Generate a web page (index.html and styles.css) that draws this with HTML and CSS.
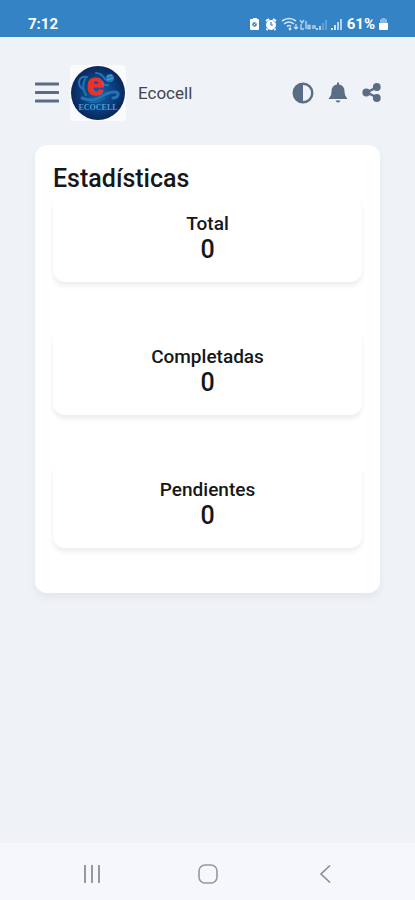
FILE: index.html
```html
<!DOCTYPE html>
<html lang="es">
<head>
    <meta charset="UTF-8">
    <meta name="viewport" content="width=device-width, initial-scale=1.0">
    <title>Ecocell</title>
    <link rel="stylesheet" href="styles.css">
</head>
<body>

    <div class="status-bar">
        <span class="time">7:12</span>
        <div class="status-icons">
            <svg width="94" height="14" viewBox="0 0 94 14" aria-hidden="true">
                <!-- Battery saver -->
                <path d="M3 2h1V1h4v1h1q1 0 1 1v9q0 1-1 1H2q-1 0-1-1V3q0-1 1-1z" fill="#fff"/>
                <circle cx="5.500" cy="7.500" r="2.300" fill="#3483c4"/>
                <path d="M4.500 8.500l2-2" stroke="#fff"/>
                <!-- Alarm -->
                <circle cx="22" cy="8" r="5" fill="#fff"/>
                <path d="M17 4l3-2M27 4l-3-2M18.500 12l-1 1M25.500 12l1 1" stroke="#fff" stroke-width="2"/>
                <path d="M22 5v3h2" fill="none" stroke="#3483c4" stroke-width="1.200"/>
                <!-- Wifi -->
                <g fill="none" stroke="#d3e5f4" stroke-width="1.600">
                    <path d="M33 4q7-5 14 0M35 7q5-4 10 0M38 9.500q2-2 4 0"/>
                    <path d="M47 7v5M45 10l2 2 2-2" stroke-width="1.200"/>
                </g>
                <circle cx="41" cy="12" r="1.400" fill="#d3e5f4"/>
                <!-- Voice over LTE -->
                <g fill="none" stroke="#b4d2eb" stroke-width="1.400">
                    <path d="M51 3l2 3 2-3M52 7v5h3M57 4v8M61 8.500h-2v3h2zM64 12V9h2v3"/>
                </g>
                <!-- Signal -->
                <path d="M67 11h2v2h-2zM70 9h2v4h-2z" fill="#b4d2eb"/>
                <path d="M73 6h2v7h-2zM76 3h2v10h-2z" fill="#669fce"/>
                <path d="M82 11h2v2h-2zM85 8h2v5h-2z" fill="#d3e5f4"/>
                <path d="M88 5h2v8h-2zM91 2h2v11h-2z" fill="#b4d2eb"/>
            </svg>
            <span>61%</span>
            <svg width="9" height="14" viewBox="0 0 9 14" aria-hidden="true">
                <path d="M3 1h3v1h1q1 0 1 1v3H1V3q0-1 1-1h1z" fill="#8ab8df"/>
                <path d="M0 6h9v6q0 1-1 1H1q-1 0-1-1z" fill="#fff"/>
            </svg>
        </div>
    </div>

    <header class="header">
        <button class="icon-button" type="button" aria-label="Menú">
            <svg width="24" height="22" viewBox="0 0 24 22">
                <path d="M1 2h22M1 10.500h22M1 19h22" stroke="#5a6d84" stroke-width="3" stroke-linecap="round"/>
            </svg>
        </button>
        <a class="brand" href="#">
            <svg class="logo" width="56" height="56" viewBox="0 0 56 56" aria-hidden="true">
                <defs>
                    <radialGradient id="globe">
                        <stop offset="0" stop-color="#1465a8"/>
                        <stop offset="0.600" stop-color="#0b3f80"/>
                        <stop offset="1" stop-color="#0a2658"/>
                    </radialGradient>
                </defs>
                <rect width="56" height="56" rx="4" fill="#fafbfd"/>
                <circle cx="28" cy="28" r="27" fill="url(#globe)"/>
                <g fill="none" stroke="#2474b4" stroke-linecap="round">
                    <path d="M17 12q-7-1-8 5 0 5 4 7M15 14q-4 8 1 16" stroke-width="2"/>
                    <path d="M12 33q10 4 17 0 9-6 15-6 5 0 4 3-1 3-5 3" stroke-width="3"/>
                    <path d="M26 8q5 0 9 6l3 2M32 17q2 4 6 3" stroke-width="2"/>
                    <path d="M19 37q9 2 16-4" stroke-width="1"/>
                </g>
                <circle cx="40" cy="13" r="4" fill="#2878b8"/>
                <path d="M37 12l5-2M37 15l6-2" stroke="#4c9fd5"/>
                <text class="logo-letter" x="25" y="30" text-anchor="middle">e</text>
                <text class="logo-name" x="28" y="45" text-anchor="middle">ECOCELL</text>
            </svg>
            <span>Ecocell</span>
        </a>
        <div class="actions">
            <button class="icon-button" type="button" aria-label="Cambiar tema">
                <svg width="22" height="22" viewBox="0 0 22 22">
                    <circle cx="11" cy="11" r="9.300" fill="none" stroke="#5a6d84" stroke-width="2.400"/>
                    <path d="M11 2a9 9 0 0 0 0 18z" fill="#5a6d84"/>
                </svg>
            </button>
            <button class="icon-button" type="button" aria-label="Notificaciones">
                <svg width="20" height="22" viewBox="0 0 20 22">
                    <path d="M9 1.500q0-1.200 1-1.200t1 1.200v1q5.500 1 5.500 7 0 4 2 6 .8.800.8 1.500H.7q0-.7.800-1.500 2-2 2-6 0-6 5.500-7z" fill="#5a6d84"/>
                    <path d="M7.500 18.500h5q-.5 2-2.500 2t-2.500-2z" fill="#5a6d84"/>
                </svg>
            </button>
            <button class="icon-button" type="button" aria-label="Compartir">
                <svg width="20" height="22" viewBox="0 0 20 22">
                    <path d="M15 5L5 10.500l10 5" fill="none" stroke="#5a6d84" stroke-width="2.400"/>
                    <g fill="#5a6d84">
                        <circle cx="14.800" cy="5" r="3.900"/>
                        <circle cx="4.300" cy="10.500" r="3.900"/>
                        <circle cx="14.800" cy="16" r="3.900"/>
                    </g>
                </svg>
            </button>
        </div>
    </header>

    <main class="container">
        <h1>Estadísticas</h1>
        <div class="stats">
            <div class="stat">
                <h2>Total</h2>
                <p>0</p>
            </div>
            <div class="stat">
                <h2>Completadas</h2>
                <p>0</p>
            </div>
            <div class="stat">
                <h2>Pendientes</h2>
                <p>0</p>
            </div>
        </div>
    </main>

    <nav class="nav-bar">
        <button class="icon-button" type="button" aria-label="Recientes">
            <svg width="20" height="20" viewBox="0 0 20 20">
                <path d="M3 1v18M10 1v18M17 1v18" stroke="#8d8e91" stroke-width="1.800"/>
            </svg>
        </button>
        <button class="icon-button" type="button" aria-label="Inicio">
            <svg width="20" height="20" viewBox="0 0 20 20">
                <rect x="1" y="1" width="18" height="18" rx="6" fill="none" stroke="#97989b" stroke-width="1.600"/>
            </svg>
        </button>
        <button class="icon-button" type="button" aria-label="Atrás">
            <svg width="20" height="20" viewBox="0 0 20 20">
                <path d="M15 1.500L6 10l9 8.500" fill="none" stroke="#8d8e91" stroke-width="1.700"/>
            </svg>
        </button>
    </nav>

</body>
</html>
```
FILE: styles.css
```css
* {
    box-sizing: border-box;
}
body {
    display: flex;
    flex-direction: column;
    min-height: 100vh;
    margin: 0;
    font-family: Roboto, Arial, sans-serif;
    background-color: #eff3f8;
    color: #15171a;
}
svg {
    display: block;
}
h1, h2, p {
    margin: 0;
    font-weight: 500;
}
.status-bar {
    display: flex;
    justify-content: space-between;
    align-items: center;
    height: 37px;
    padding: 10px 27px 0 28px;
    background-color: #3483c4;
    color: #fff;
    font-size: 15px;
    font-weight: 700;
}
.status-icons {
    display: flex;
    align-items: center;
    gap: 4px;
    font-size: 15px;
}
.header {
    display: flex;
    align-items: center;
    padding: 28px 33px 24px 35px;
}
.icon-button {
    padding: 0;
    border: none;
    background: none;
    cursor: pointer;
}
.brand {
    display: flex;
    align-items: center;
    gap: 12px;
    margin-left: 11px;
    color: #42464c;
    font-size: 17px;
    text-decoration: none;
}
.logo-letter {
    fill: #ee3128;
    stroke: #ee3128;
    font-family: "Liberation Sans", Arial, sans-serif;
    font-size: 31px;
    font-weight: 700;
}
.logo-name {
    fill: #4ba0d5;
    font-family: "Liberation Serif", serif;
    font-size: 8px;
    font-weight: 700;
}
.actions {
    display: flex;
    gap: 14px;
    margin-left: auto;
}
.container {
    margin: 0 35px;
    padding: 18px 18px 45px;
    border-radius: 12px;
    background-color: #fff;
    box-shadow: 0 5px 8px rgba(0, 0, 0, 0.05);
}
h1 {
    font-size: 25px;
    line-height: 32px;
}
.stats {
    display: flex;
    flex-direction: column;
    gap: 46px;
}
.stat {
    padding: 16px 16px 18px;
    border-radius: 12px;
    box-shadow: 0 4px 5px rgba(0, 0, 0, 0.07);
    text-align: center;
}
.stat h2 {
    font-size: 19px;
    line-height: 25px;
}
.stat p {
    font-size: 25px;
    line-height: 28px;
}
.nav-bar {
    display: flex;
    justify-content: space-around;
    align-items: center;
    height: 57px;
    margin-top: auto;
    padding: 4px 32px 0 34px;
    background-color: #f6f7fa;
}
```
